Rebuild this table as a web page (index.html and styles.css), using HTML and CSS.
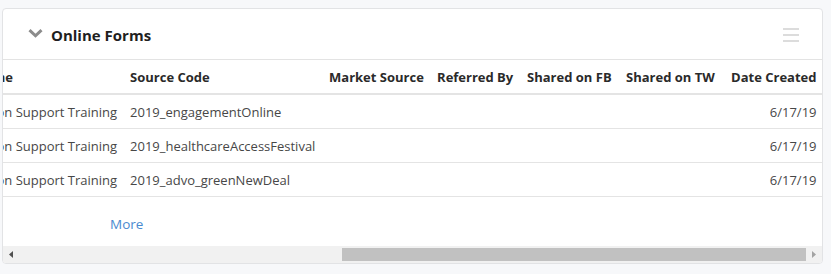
FILE: index.html
```html
<!DOCTYPE html>
<html lang="en">
<head>
<meta charset="utf-8">
<title>Online Forms</title>
<link rel="stylesheet" href="styles.css">
</head>
<body>
<div class="page">
  <section class="card">
    <header class="card-header">
      <span class="toggle">
        <svg width="15" height="9" viewBox="0 0 15 9" aria-hidden="true"><path d="M1.5 1.2 L7.5 6.8 L13.5 1.2" fill="none" stroke="#8c8c8c" stroke-width="3"/></svg>
      </span>
      <h2 class="card-title">Online Forms</h2>
      <span class="menu">
        <svg width="16" height="14" viewBox="0 0 16 14" aria-hidden="true"><rect x="0" y="0" width="16" height="2" fill="#dcdcdc"/><rect x="0" y="6" width="16" height="2" fill="#dcdcdc"/><rect x="0" y="12" width="16" height="2" fill="#dcdcdc"/></svg>
      </span>
    </header>
    <div class="scroller">
      <table class="grid">
        <thead>
          <tr>
            <th class="col-id">Form ID</th>
            <th class="col-owner">Created By</th>
            <th class="col-status">Status</th>
            <th class="col-camp">Campaign</th>
            <th>Name</th>
            <th class="col-src">Source Code</th>
            <th class="col-mkt">Market Source</th>
            <th class="col-ref">Referred By</th>
            <th class="col-fb">Shared on FB</th>
            <th class="col-tw">Shared on TW</th>
            <th class="col-date">Date Created</th>
          </tr>
        </thead>
        <tbody>
          <tr>
            <td>1042</td><td>Admin</td><td>Active</td><td>Engagement</td>
            <td>Action Support Training</td>
            <td>2019_engagementOnline</td>
            <td></td><td></td><td></td><td></td>
            <td class="num">6/17/19</td>
          </tr>
          <tr>
            <td>1043</td><td>Admin</td><td>Active</td><td>Healthcare Access</td>
            <td>Action Support Training</td>
            <td>2019_healthcareAccessFestival</td>
            <td></td><td></td><td></td><td></td>
            <td class="num">6/17/19</td>
          </tr>
          <tr>
            <td>1044</td><td>Admin</td><td>Active</td><td>Green New Deal</td>
            <td>Action Support Training</td>
            <td>2019_advo_greenNewDeal</td>
            <td></td><td></td><td></td><td></td>
            <td class="num">6/17/19</td>
          </tr>
        </tbody>
      </table>
      <div class="card-footer">
        <a class="more" href="#">More</a>
      </div>
    </div>
    <div class="hscroll" aria-hidden="true">
      <span class="hs-btn">
        <svg width="4" height="7" viewBox="0 0 4 7"><path d="M4 0 L0 3.5 L4 7 Z" fill="#505050"/></svg>
      </span>
      <span class="hs-track">
        <span class="hs-thumb" style="width: 58.9%"></span>
      </span>
      <span class="hs-btn">
        <svg width="4" height="7" viewBox="0 0 4 7"><path d="M0 0 L4 3.5 L0 7 Z" fill="#a3a3a3"/></svg>
      </span>
    </div>
  </section>
</div>
</body>
</html>
```
FILE: styles.css
```css
* { box-sizing: border-box; }

html, body {
  margin: 0;
  background: #f7f8fa;
  font-family: "Open Sans", "Noto Sans", sans-serif;
}

.page {
  padding: 8px 8px 0 2px;
}

.card {
  background: #fff;
  border: 1px solid #e2e3e5;
  border-radius: 4px;
  overflow: hidden;
}

.card-header {
  height: 51px;
  border-bottom: 1px solid #e3e3e3;
  display: flex;
  align-items: center;
  padding: 0 23px 0 25px;
}

.toggle {
  display: flex;
  margin-top: -1px;
  margin-right: 8px;
}

.card-title {
  margin: 2px 0 0;
  flex: 1;
  font-size: 15px;
  font-weight: 700;
  color: #1f1f1f;
  line-height: 20px;
}

.menu {
  display: flex;
  margin-top: 1px;
}

.scroller {
  direction: rtl;
  overflow: hidden;
}

.grid {
  direction: ltr;
  width: max-content;
  border-collapse: separate;
  border-spacing: 0;
  font-size: 13px;
}

.grid th,
.grid td {
  white-space: nowrap;
  padding: 0 6.5px;
  text-align: left;
}

.grid th {
  height: 35px;
  border-bottom: 2px solid #e4e4e4;
  font-weight: 700;
  color: #2a2a2a;
}

.grid td {
  height: 34px;
  border-bottom: 1px solid #e4e4e4;
  color: #474747;
}

.grid th:last-child,
.grid td:last-child {
  padding-right: 5.5px;
}

.grid td.num {
  text-align: right;
}

.col-id { width: 90px; }
.col-owner { width: 130px; }
.col-status { width: 100px; }
.col-camp { width: 170px; }
.col-src { width: 199px; }
.col-mkt { width: 108px; }
.col-ref { width: 90px; }
.col-fb { width: 99px; }
.col-tw { width: 105px; }
.col-date { width: 91px; }

.card-footer {
  direction: ltr;
  height: 49px;
  padding: 18px 0 0 107px;
  font-size: 13.5px;
  line-height: 18px;
}

.more {
  color: #4a8ad0;
  text-decoration: none;
}

.hscroll {
  display: flex;
  height: 17px;
  background: #f1f1f1;
}

.hs-btn {
  width: 16px;
  display: flex;
  align-items: center;
  justify-content: center;
}

.hs-track {
  flex: 1;
  display: flex;
  justify-content: flex-end;
  padding: 2px 0;
}

.hs-thumb {
  background: #c1c1c1;
}
```
